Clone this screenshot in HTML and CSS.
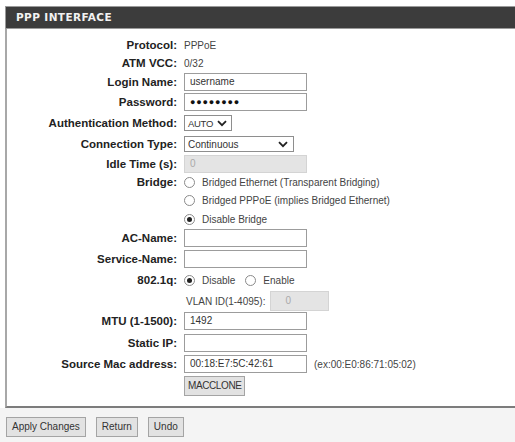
FILE: index.html
```html
<!DOCTYPE html>
<html lang="en">
<head>
    <meta charset="UTF-8">
    <title>PPP Interface</title>
    <link rel="stylesheet" href="styles.css">
</head>
<body>
    <div class="box">
        <div class="boxTitle">PPP INTERFACE</div>

        <div class="form">
            <div class="row short">
                <div class="label">Protocol:</div>
                <div class="value">PPPoE</div>
            </div>
            <div class="row short">
                <div class="label">ATM VCC:</div>
                <div class="value">0/32</div>
            </div>
            <div class="row">
                <div class="label">Login Name:</div>
                <div class="value"><span class="input">username</span></div>
            </div>
            <div class="row">
                <div class="label">Password:</div>
                <div class="value"><span class="input dots">&#9679;&#9679;&#9679;&#9679;&#9679;&#9679;&#9679;&#9679;</span></div>
            </div>
            <div class="row tall">
                <div class="label">Authentication Method:</div>
                <div class="value">
                    <span class="select auth">AUTO
                        <svg width="10" height="7" viewBox="0 0 10 7"><path d="M1 1.2 L5 5.2 L9 1.2" fill="none" stroke="#222" stroke-width="1.8"/></svg>
                    </span>
                </div>
            </div>
            <div class="row">
                <div class="label">Connection Type:</div>
                <div class="value">
                    <span class="select conn">Continuous
                        <svg width="10" height="7" viewBox="0 0 10 7"><path d="M1 1.2 L5 5.2 L9 1.2" fill="none" stroke="#222" stroke-width="1.8"/></svg>
                    </span>
                </div>
            </div>
            <div class="row mid">
                <div class="label">Idle Time (s):</div>
                <div class="value"><span class="input disabled">0</span></div>
            </div>
            <div class="row short">
                <div class="label">Bridge:</div>
                <div class="value"><span class="radio"></span>Bridged Ethernet (Transparent Bridging)</div>
            </div>
            <div class="row mid">
                <div class="label"></div>
                <div class="value"><span class="radio"></span>Bridged PPPoE (implies Bridged Ethernet)</div>
            </div>
            <div class="row short">
                <div class="label"></div>
                <div class="value"><span class="radio on"></span>Disable Bridge</div>
            </div>
            <div class="row">
                <div class="label">AC-Name:</div>
                <div class="value"><span class="input"></span></div>
            </div>
            <div class="row wide">
                <div class="label">Service-Name:</div>
                <div class="value"><span class="input"></span></div>
            </div>
            <div class="row tall">
                <div class="label">802.1q:</div>
                <div class="value">
                    <span class="radio on"></span>Disable
                    <span class="radio second"></span>Enable
                </div>
            </div>
            <div class="row mid">
                <div class="label"></div>
                <div class="value vlan">VLAN ID(1-4095): <span class="input disabled small">0</span></div>
            </div>
            <div class="row tall">
                <div class="label">MTU (1-1500):</div>
                <div class="value"><span class="input">1492</span></div>
            </div>
            <div class="row wide">
                <div class="label">Static IP:</div>
                <div class="value"><span class="input"></span></div>
            </div>
            <div class="row tall">
                <div class="label">Source Mac address:</div>
                <div class="value">
                    <span class="input">00:18:E7:5C:42:61</span>
                    <span class="hint">(ex:00:E0:86:71:05:02)</span>
                </div>
            </div>
            <div class="row tall">
                <div class="label"></div>
                <div class="value"><span class="btn clone">MACCLONE</span></div>
            </div>
        </div>
    </div>

    <!-- page buttons -->
    <div class="actions">
        <span class="btn">Apply Changes</span>
        <span class="btn">Return</span>
        <span class="btn">Undo</span>
    </div>
</body>
</html>
```

FILE: styles.css
```css
html, body {
    overflow: hidden;
}

body {
    margin: 0;
    padding-top: 6px;
    background-color: #ffffff;
    font-family: "Liberation Sans", Arial, sans-serif;
    font-size: 10px;
    color: #333;
}

.box {
    margin-left: 5px;
    border: 2px solid #a8a8a8;
    border-top: none;
    border-right: none;
    border-bottom-color: #7c7c7c;
    background-color: #fff;
}

.boxTitle {
    height: 21px;
    line-height: 21px;
    padding-left: 10px;
    margin-left: -2px;
    background-color: #3c3c3c;
    border: 1px solid #9a9a9a;
    border-right: none;
    color: #f2f2f2;
    font-family: "DejaVu Sans", Verdana, sans-serif;
    font-weight: bold;
    font-size: 10.5px;
    letter-spacing: 0.4px;
}

.form {
    padding: 7px 0 9px 0;
}

.row {
    display: grid;
    grid-template-columns: 170px 1fr;
    column-gap: 7px;
    align-items: center;
    height: 20px;
}

.row.short {
    height: 18px;
}

.row.mid {
    height: 19px;
}

.row.wide {
    height: 21px;
}

.row.tall {
    height: 22px;
}

.label {
    text-align: right;
    font-family: "Liberation Sans", Arial, sans-serif;
    font-weight: bold;
    font-size: 11.5px;
    color: #222;
}

.value {
    display: flex;
    align-items: center;
    color: #444;
}

.input {
    box-sizing: border-box;
    display: inline-block;
    width: 123px;
    height: 18px;
    line-height: 16px;
    padding-left: 5px;
    border: 1px solid #9c9c9c;
    background-color: #fff;
    color: #333;
}

.input.dots {
    font-size: 9px;
    letter-spacing: 0.8px;
    color: #111;
}

.input.disabled {
    background-color: #e4e4e4;
    border-color: #d4d4d4;
    color: #aaa;
}

.input.small {
    width: 59px;
    height: 20px;
    line-height: 18px;
    padding-left: 14px;
    margin-left: 5px;
}

.vlan {
    padding-left: 2px;
}

.select {
    box-sizing: border-box;
    display: inline-flex;
    align-items: center;
    justify-content: space-between;
    height: 16px;
    padding: 0 4px 0 3px;
    border: 1px solid #8e8e8e;
    background-color: #fff;
    color: #333;
}

.select.auth {
    width: 48px;
    font-size: 9.5px;
    letter-spacing: -0.3px;
}

.select.conn {
    width: 110px;
    padding-right: 5px;
}

.radio {
    box-sizing: border-box;
    display: inline-block;
    position: relative;
    width: 11px;
    height: 11px;
    margin-right: 7px;
    border: 1px solid #8a8a8a;
    border-radius: 50%;
    background-color: #fff;
}

.radio.on::after {
    content: "";
    position: absolute;
    left: 2px;
    top: 2px;
    width: 5px;
    height: 5px;
    border-radius: 50%;
    background-color: #222;
}

.radio.second {
    margin-left: 10px;
}

.hint {
    margin-left: 7px;
    font-size: 10px;
    color: #444;
}

.btn {
    box-sizing: border-box;
    display: inline-block;
    height: 20px;
    line-height: 18px;
    padding: 0 5px;
    border: 1px solid #a4a4a4;
    background-color: #e2e2e2;
    color: #333;
    font-size: 10px;
}

.btn.clone {
    padding: 0 3px;
    font-size: 10px;
    letter-spacing: -0.4px;
}

.actions {
    display: flex;
    gap: 10px;
    height: 37px;
    padding: 9px 0 0 6px;
    box-sizing: border-box;
    background-color: #f4f4f4;
}
```
